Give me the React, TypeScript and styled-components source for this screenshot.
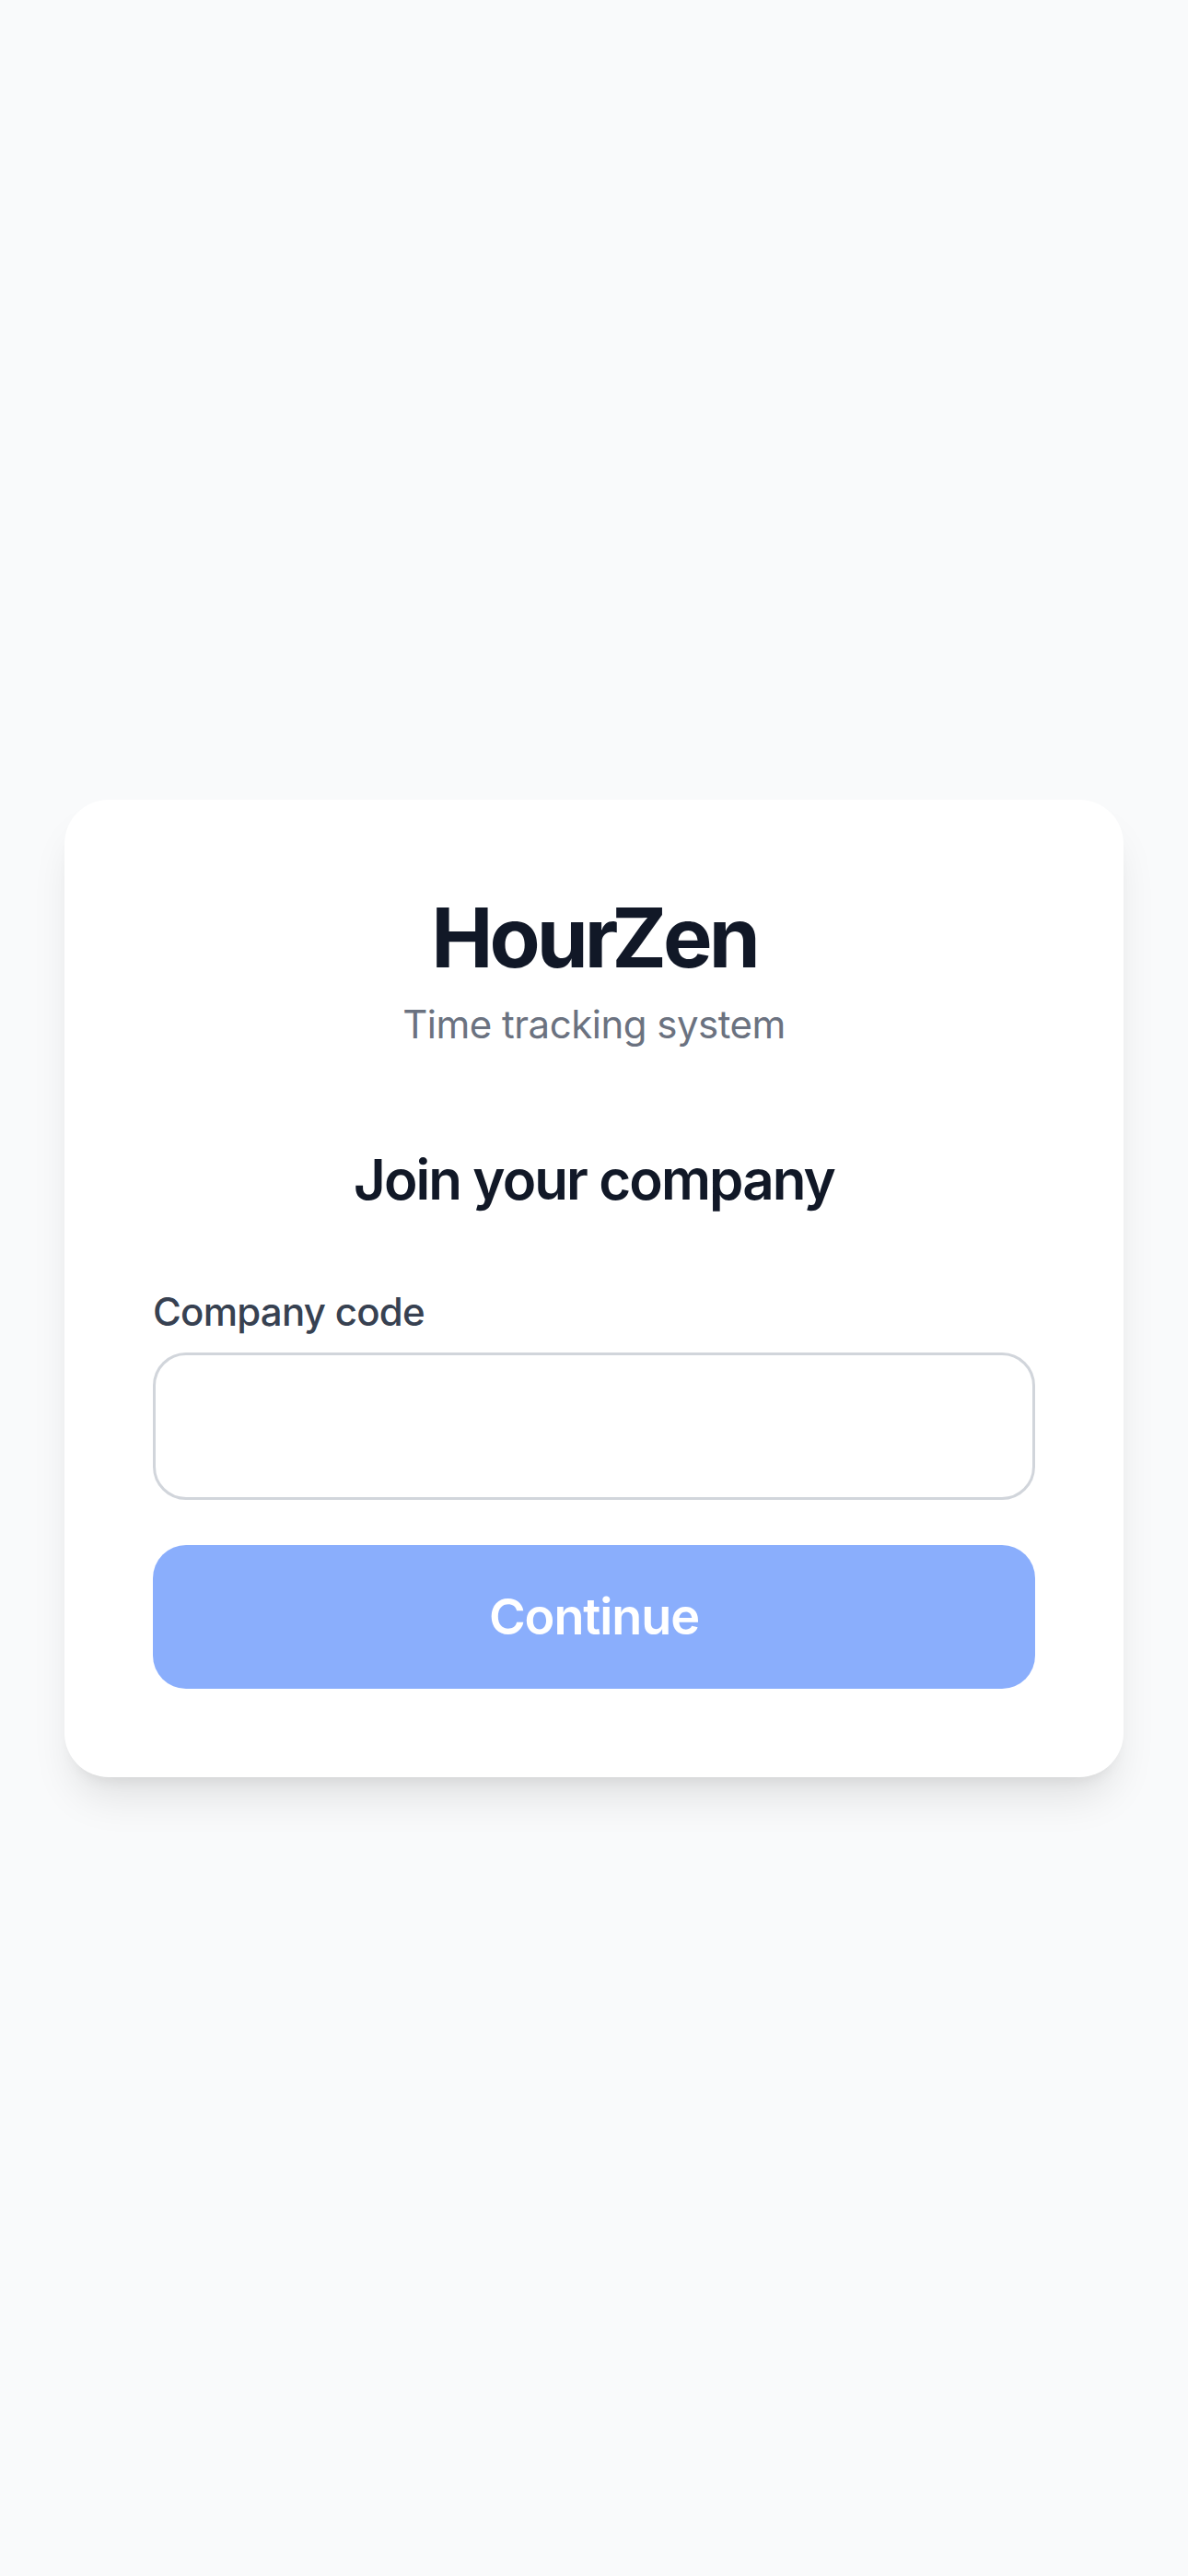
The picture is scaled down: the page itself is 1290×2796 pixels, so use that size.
import React from "react";
import styled, { createGlobalStyle } from "styled-components";

const GlobalStyle = createGlobalStyle`
  * {
    box-sizing: border-box;
  }
  html,
  body {
    margin: 0;
    padding: 0;
    background: #f9fafb;
    font-family: Inter, "Noto Sans", "Liberation Sans", sans-serif;
  }
`;

const Page = styled.main`
  min-height: 2796px;
  display: flex;
  align-items: center;
  justify-content: center;
  padding: 0 70px;
  background: #f9fafb;
`;

const Card = styled.section`
  width: 100%;
  background: #ffffff;
  border-radius: 48px;
  padding: 96px;
  box-shadow: 0 30px 45px -9px rgba(0, 0, 0, 0.1),
    0 12px 18px -12px rgba(0, 0, 0, 0.1);
`;

const Header = styled.header`
  text-align: center;
  margin-bottom: 96px;
`;

const Brand = styled.h1`
  margin: 0;
  font-size: 90px;
  line-height: 108px;
  font-weight: 700;
  color: #111827;
  letter-spacing: -4px;
`;

const Tagline = styled.p`
  margin: 10px 0 0;
  font-size: 42px;
  line-height: 60px;
  color: #6b7280;
  letter-spacing: -0.5px;
`;

const Title = styled.h2`
  margin: 0 0 72px;
  text-align: center;
  font-size: 60px;
  line-height: 84px;
  font-weight: 600;
  color: #111827;
  letter-spacing: -1.9px;
`;

const Form = styled.form`
  display: flex;
  flex-direction: column;
`;

const Label = styled.label`
  font-size: 42px;
  line-height: 60px;
  font-weight: 500;
  color: #374151;
  letter-spacing: -0.75px;
`;

const Input = styled.input`
  margin-top: 14px;
  height: 160px;
  width: 100%;
  border: 3px solid #d1d5db;
  border-radius: 36px;
  padding: 0 48px;
  font-size: 48px;
  font-family: inherit;
  color: #111827;
  background: #ffffff;
  outline: none;
`;

const Button = styled.button`
  margin-top: 49px;
  height: 156px;
  width: 100%;
  border: none;
  border-radius: 36px;
  background: #8aaefc;
  color: #ffffff;
  font-family: inherit;
  font-size: 54px;
  font-weight: 600;
  letter-spacing: -1.1px;
  cursor: not-allowed;
`;

export default function App() {
  return (
    <>
      <GlobalStyle />
      <Page>
        <Card>
          <Header>
            <Brand>HourZen</Brand>
            <Tagline>Time tracking system</Tagline>
          </Header>
          <Title>Join your company</Title>
          <Form onSubmit={(e) => e.preventDefault()}>
            <Label htmlFor="company-code">Company code</Label>
            <Input id="company-code" type="text" />
            <Button type="submit" disabled>
              Continue
            </Button>
          </Form>
        </Card>
      </Page>
    </>
  );
}
